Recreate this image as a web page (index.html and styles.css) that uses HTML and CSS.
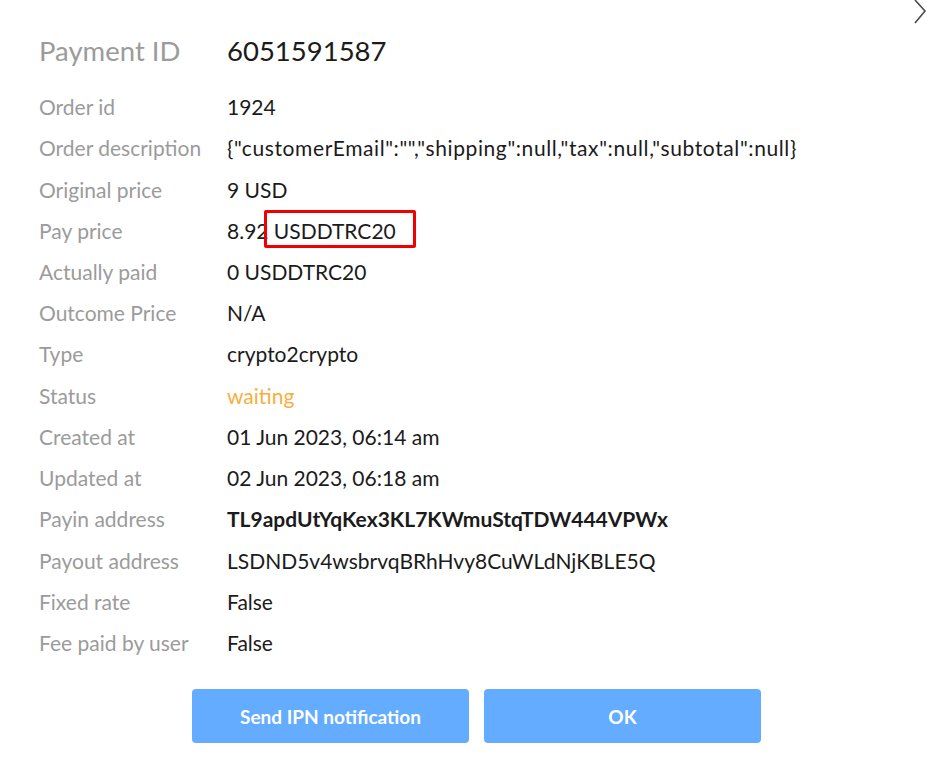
FILE: index.html
```html
<!DOCTYPE html>
<html>
<head>
<meta charset="utf-8">
<link rel="stylesheet" href="styles.css">
</head>
<body>
<div class="modal">
  <button class="close" aria-label="Close">
    <svg width="14" height="26" viewBox="0 0 14 26"><path d="M2 1 L12 12 L2 24" fill="none" stroke="#4a4a4a" stroke-width="1.6"/></svg>
  </button>
  <div class="head">
    <div class="label big">Payment ID</div>
    <div class="value big">6051591587</div>
  </div>
  <div class="rows">
    <div class="label">Order id</div><div class="value">1924</div>
    <div class="label">Order description</div><div class="value json">{"customerEmail":"","shipping":null,"tax":null,"subtotal":null}</div>
    <div class="label">Original price</div><div class="value">9 USD</div>
    <div class="label">Pay price</div><div class="value marked">8.92 USDDTRC20<span class="mark"></span></div>
    <div class="label">Actually paid</div><div class="value">0 USDDTRC20</div>
    <div class="label">Outcome Price</div><div class="value">N/A</div>
    <div class="label">Type</div><div class="value">crypto2crypto</div>
    <div class="label">Status</div><div class="value waiting">waiting</div>
    <div class="label">Created at</div><div class="value">01 Jun 2023, 06:14 am</div>
    <div class="label">Updated at</div><div class="value">02 Jun 2023, 06:18 am</div>
    <div class="label">Payin address</div><div class="value strong">TL9apdUtYqKex3KL7KWmuStqTDW444VPWx</div>
    <div class="label">Payout address</div><div class="value">LSDND5v4wsbrvqBRhHvy8CuWLdNjKBLE5Q</div>
    <div class="label">Fixed rate</div><div class="value">False</div>
    <div class="label">Fee paid by user</div><div class="value">False</div>
  </div>
  <div class="actions">
    <button class="btn">Send IPN notification</button>
    <button class="btn">OK</button>
  </div>
</div>
</body>
</html>
```
FILE: styles.css
```css
html, body {
  margin: 0;
  padding: 0;
  background: #ffffff;
}
body {
  font-family: Lato, "Noto Sans", sans-serif;
  color: #1b1b1b;
}
.modal {
  position: relative;
  width: 927px;
  height: 766px;
  box-sizing: border-box;
  padding: 28px 0 0 39px;
}
.close {
  position: absolute;
  top: -1px;
  right: 0;
  border: 0;
  background: none;
  padding: 0;
  width: 14px;
  height: 26px;
  cursor: pointer;
}
.head {
  display: grid;
  grid-template-columns: 188px 1fr;
  height: 44px;
  align-items: center;
}
.big {
  font-size: 27.5px;
}
.label {
  color: #9b9b9b;
}
.rows {
  margin-top: 14px;
  display: grid;
  grid-template-columns: 188px 1fr;
  grid-auto-rows: 41.23px;
  align-items: center;
  font-size: 21px;
}
.value { color: #1b1b1b; }
.json { letter-spacing: 0.6px; }
.waiting { color: #f7b03c; }
.strong { font-weight: 700; }
.marked {
  position: relative;
}
.mark {
  position: absolute;
  left: 37px;
  top: -8px;
  width: 152px;
  height: 38px;
  box-sizing: border-box;
  border: 3px solid #f10000;
  border-radius: 2px;
}
.actions {
  display: flex;
  gap: 15px;
  margin: 26px 0 0 153px;
}
.btn {
  width: 277px;
  height: 54px;
  border: 0;
  border-radius: 4px;
  background: #64acff;
  color: #ffffff;
  font-family: Lato, "Noto Sans", sans-serif;
  font-weight: 700;
  font-size: 19px;
}
```
